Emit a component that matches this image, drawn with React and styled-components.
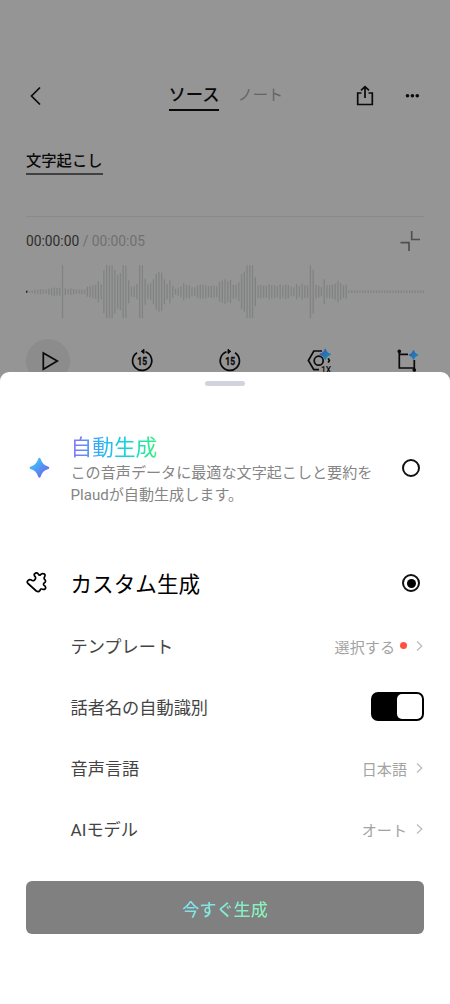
import React, { useState } from 'react'
import styled, { createGlobalStyle } from "styled-components";

const GlobalStyle = createGlobalStyle`
  * {
    box-sizing: border-box;
  }
  body {
    margin: 0;
    background: #959595;
    font-family: Roboto, "Noto Sans CJK JP", sans-serif;
  }
  button {
    border: 0;
    padding: 0;
    background: none;
    font: inherit;
    color: inherit;
  }
  svg {
    display: block;
    flex: none;
  }
`;

// bar heights, left to right
const wave = [
  2, 2, 2.5, 4.5, 4, 5, 4, 4, 6, 7, 8.5, 7.5, 8, 53, 7, 5.5, 6.5, 5.5, 4, 4, 5, 4,
  10, 11, 12.5, 14, 21, 15, 43, 53, 52, 53, 44, 34, 37, 53, 52, 23, 10, 11, 15,
  53, 53, 26, 15, 17, 25, 36, 40, 38, 25, 15, 23, 12, 6, 8, 11, 17, 13, 13, 9, 9,
  12, 14, 14, 13, 11, 12, 12, 11, 20, 22, 25, 21, 23, 14, 14, 19, 35, 40, 53, 53,
  53, 29, 13, 14, 12, 12, 15, 13, 13, 11, 15, 12, 14, 13, 9, 9, 15, 11, 16, 13,
  12, 53, 44, 14, 12, 9, 25, 13, 13, 14, 16, 22, 17, 13, 14,
  ...Array(28).fill(2.5),
];

const Screen = styled.main`
  position: relative;
  width: 450px;
  height: 1004px;
  overflow: hidden;
  background: #959595;
  color: #0a0a0a;
`;

const Player = styled.section`
  padding: 76px 26px 0;
`;

const TopBar = styled.header`
  height: 40px;
  display: grid;
  grid-template-columns: 142.5px auto 1fr;
  align-items: center;
`;

const Tabs = styled.div`
  display: flex;
  align-items: center;
  gap: 18px;
`;

const Tab = styled.button`
  height: 30px;
  font-size: ${(props) => (props.$active ? "17.3px" : "15.2px")};
  font-weight: ${(props) => (props.$active ? 500 : 400)};
  line-height: 28px;
  color: ${(props) => (props.$active ? "#0a0a0a" : "#656565")};
  border-bottom: 2px solid ${(props) => (props.$active ? "#0a0a0a" : "transparent")};
`;

const TopActions = styled.div`
  display: flex;
  align-items: center;
  justify-content: flex-end;
  gap: 30px;
  padding-right: 4px;
`;

const SubTab = styled.div`
  width: 77px;
  height: 28px;
  margin-top: 31px;
  line-height: 28px;
  font-size: 15.3px;
  font-weight: 500;
  white-space: nowrap;
  border-bottom: 2px solid #404040;
`;

const TimeRow = styled.div`
  display: flex;
  align-items: center;
  justify-content: space-between;
  height: 48px;
  margin-top: 41px;
  padding-right: 4px;
  border-top: 1px solid #8a8a8a;
  font-size: 13.8px;
  color: #707070;
`;

const Current = styled.span`
  color: #2d2d2d;
`;

const WaveBox = styled.div`
  height: 55px;
  padding-top: 1px;
`;

const Controls = styled.div`
  display: grid;
  grid-template-columns: 104px 88px 89px 90px auto;
  align-items: center;
  height: 44px;
  margin-top: 20px;
`;

const Play = styled.button`
  display: flex;
  align-items: center;
  justify-content: center;
  width: 44px;
  height: 44px;
  border-radius: 50%;
  background: #8c8c8c;
`;

const Sheet = styled.section`
  position: absolute;
  left: 0;
  right: 0;
  bottom: 0;
  height: 632px;
  padding: 9px 26px 0;
  border-radius: 9px 9px 0 0;
  background: #fff;
`;

const Handle = styled.div`
  width: 40px;
  height: 5px;
  margin: 0 auto;
  border-radius: 3px;
  background: #d1d4de;
`;

const Option = styled.div`
  display: grid;
  grid-template-columns: 44.5px 1fr 22px;
  align-items: center;
  height: ${(props) => props.$height};
  margin-top: ${(props) => props.$top};
`;

const OptionText = styled.div`
  padding-top: 4px;
`;

const AutoTitle = styled.h2`
  width: max-content;
  margin: 0;
  font-size: 21.7px;
  font-weight: 400;
  line-height: 28px;
  background: linear-gradient(90deg, #8a70f4 0%, #29b6f6 38%, #10d5dc 65%, #38ef7d 100%);
  background-clip: text;
  color: transparent;
`;

const CustomTitle = styled.h2`
  margin: 0;
  font-size: 21.6px;
  font-weight: 400;
  line-height: 30px;
  color: #000;
`;

const Description = styled.p`
  margin: 0;
  font-size: 15.1px;
  line-height: 22px;
  white-space: nowrap;
  color: #858585;
`;

const Radio = styled.button`
  display: flex;
  align-items: center;
  justify-content: center;
  width: 18px;
  height: 18px;
  border: 2px solid #111;
  border-radius: 50%;

  &::after {
    content: "";
    width: 9px;
    height: 9px;
    flex: none;
    border-radius: 50%;
    background: ${(props) => (props.$checked ? "#000" : "transparent")};
  }
`;

const Settings = styled.div`
  margin-top: 15px;
  padding-left: 44.5px;
`;

const Row = styled.div`
  display: flex;
  align-items: center;
  justify-content: space-between;
  height: 61px;
  font-size: 17.2px;
  color: #444;
`;

const Value = styled.div`
  display: flex;
  align-items: center;
  gap: 9px;
  font-size: 15.1px;
  color: #a3a3a3;
`;

const Dot = styled.i`
  width: 7px;
  height: 7px;
  margin-left: -4px;
  border-radius: 50%;
  background: #ff5340;
`;

const Switch = styled.button`
  display: flex;
  justify-content: ${(props) => (props.$on ? "flex-end" : "flex-start")};
  width: 53px;
  height: 29px;
  padding: 2px;
  border-radius: 7px;
  background: #000;

  &::after {
    content: "";
    width: 25px;
    height: 25px;
    border-radius: 5px;
    background: #fff;
  }
`;

const Generate = styled.button`
  display: flex;
  align-items: center;
  justify-content: center;
  width: 100%;
  height: 53px;
  margin-top: 22px;
  border-radius: 6px;
  background: #808080;
  font-size: 17.1px;
  font-weight: 500;
`;

const GenerateText = styled.span`
  padding-top: 1px;
  background: linear-gradient(90deg, #80e2f0, #88f2b6);
  background-clip: text;
  color: transparent;
`;

const BackIcon = () => (
  <svg width="20" height="20" viewBox="0 0 20 20" fill="none" stroke="#0a0a0a" strokeWidth="1.7">
    <path d="M14 1.500L5.500 10l8.500 8.500" />
  </svg>
);

const ShareIcon = () => (
  <svg width="18" height="22" viewBox="0 0 18 22" fill="none" stroke="#0a0a0a" strokeWidth="1.7">
    <path d="M5.500 8H1.700v11.500h14.600V8h-3.800M9 13V2M5 5.300L9 1.700l4 3.600" />
  </svg>
);

const MoreIcon = () => (
  <svg width="16" height="22" viewBox="0 0 16 22" fill="#0a0a0a">
    <circle cx="3.500" cy="10.700" r="1.800" />
    <circle cx="8.400" cy="10.700" r="1.800" />
    <circle cx="13.300" cy="10.700" r="1.800" />
  </svg>
);

const CollapseIcon = () => (
  <svg width="20" height="20" viewBox="0 0 20 20" fill="none" stroke="#505050" strokeWidth="1.7">
    <path d="M11.700 0v8.500h8.300M.5 11.700h8.500V20" />
  </svg>
);

const Waveform = () => (
  <svg width="398" height="54" viewBox="0 0 398 54">
    {wave.map((h, i) => (
      <rect
        key={i}
        x={i * 2.754 + 0.1}
        y={26.7 - h / 2}
        width="1.3"
        height={h}
        fill={i === 0 ? "#111" : "#818383"}
      />
    ))}
  </svg>
);

const PlayIcon = () => (
  <svg width="44" height="44" viewBox="0 0 44 44" fill="none" stroke="#0a0a0a" strokeWidth="1.7">
    <path d="M17.300 14v16.300L31.300 22z" />
  </svg>
);

const Skip15Icon = ({ forward }) => (
  <svg width="24" height="44" viewBox="0 0 24 44" fill="none" stroke="#0a0a0a" strokeWidth="1.7">
    <g transform={forward ? "translate(24 0) scale(-1 1)" : undefined}>
      <path d="M7 13.700a9.600 9.600 0 1 0 8.500-.9" />
      <path d="M14 10.300v4.200l-2.800-2.100z" fill="#0a0a0a" strokeWidth="1" />
    </g>
    <text x="12.200" y="25.800" textAnchor="middle" fill="#0a0a0a" stroke="#0a0a0a" strokeWidth=".3" fontSize="10.500" fontWeight="700" fontFamily="Roboto, sans-serif" textLength="9.800" lengthAdjust="spacingAndGlyphs">15</text>
  </svg>
);

const Sparkle = ({ id, x, y, size, from, to }) => (
  <g transform={`translate(${x} ${y}) scale(${size / 20})`}>
    <defs>
      <linearGradient id={id} x1="0" y1="0" x2="1" y2="1">
        <stop offset=".15" stopColor={from} />
        <stop offset=".8" stopColor={to} />
      </linearGradient>
    </defs>
    <path
      d="M8.900.8Q10 -.7 11.100.8Q12.700 7.300 19.200 8.900Q20.700 10 19.200 11.100Q12.700 12.700 11.100 19.200Q10 20.700 8.900 19.200Q7.300 12.700.8 11.100Q-.7 10 .8 8.900Q7.300 7.300 8.900.8Z"
      fill={`url(#${id})`}
      stroke="none"
    />
  </g>
);

const SpeedIcon = () => (
  <svg width="26" height="44" viewBox="0 0 26 44" fill="none" stroke="#0a0a0a" strokeWidth="1.700">
    <path d="M15 12H6.800L1.400 21.500L6.800 30.700H12" />
    <path d="M21.200 19.300l1.200 2.200-1.200 2.200" />
    <circle cx="11.700" cy="21.700" r="4.500" />
    <text x="14" y="33.500" fill="#0a0a0a" stroke="none" fontSize="8.500" fontWeight="500" fontFamily="Roboto, sans-serif">1X</text>
    <Sparkle id="speed-spark" x="12.500" y="9.500" size={11.500} from="#3b55b5" to="#168eb5" />
  </svg>
);

const CropIcon = () => (
  <svg width="26" height="44" viewBox="0 0 26 44" fill="none" stroke="#0a0a0a" strokeWidth="1.700">
    <path d="M2.300 12v17H18M2.300 15.300H11M17.300 21v11" />
    <circle cx="2.300" cy="12.300" r="1" fill="#0a0a0a" />
    <circle cx="17.300" cy="31" r="1" fill="#0a0a0a" />
    <Sparkle id="crop-spark" x="11.500" y="11" size={10} from="#3b55b5" to="#168eb5" />
  </svg>
);

const StarIcon = () => (
  <svg width="26" height="22" viewBox="0 0 26 22">
    <Sparkle id="auto-spark" x="3.400" y=".8" size={20} from="#3bc8f6" to="#686df2" />
  </svg>
);

const PuzzleIcon = () => (
  <svg width="22" height="24" viewBox="0 0 22 24" fill="none" stroke="#000" strokeWidth="1.700" strokeLinejoin="round">
    <path d="M2 9.500Q.5 11 2 12.500L10.300 20Q12.500 21.500 14 19.500Q14.500 17.300 16.500 18.300Q19.300 19 19.700 16.500Q19.500 15 18 14.300Q16.800 12.800 18.500 11.800Q20.300 10.500 19 8.800Q17.500 7.800 18.500 6Q20 3 17.200 2.600Q15.500 2.200 14.500 3.800Q13.300 4.800 12.300 3Q10.500 1 8.600 2.800Q7.600 4.500 9.300 5.800Q10.300 7.800 8.300 9.300Q6.800 10.300 5 8.800Q3.500 8 2 9.500Z" />
  </svg>
);

const ChevronIcon = () => (
  <svg width="8" height="12" viewBox="0 0 8 12" fill="none" stroke="#bcbcbc" strokeWidth="1.300">
    <path d="M1 1.500L5.800 6L1 10.500" />
  </svg>
);

const App = () => {
  const [mode, setMode] = useState("custom");
  const [speaker, setSpeaker] = useState(true);

  return (
    <Screen>
      <GlobalStyle />
      <Player>
        <TopBar>
          <BackIcon />
          <Tabs>
            <Tab $active>ソース</Tab>
            <Tab>ノート</Tab>
          </Tabs>
          <TopActions>
            <ShareIcon />
            <MoreIcon />
          </TopActions>
        </TopBar>
        <SubTab>文字起こし</SubTab>
        <TimeRow>
          <span><Current>00:00:00</Current> / 00:00:05</span>
          <CollapseIcon />
        </TimeRow>
        <WaveBox><Waveform /></WaveBox>
        <Controls>
          <Play><PlayIcon /></Play>
          <Skip15Icon />
          <Skip15Icon forward />
          <SpeedIcon />
          <CropIcon />
        </Controls>
      </Player>

      <Sheet>
        <Handle />
        <Option $height="76px" $top="44px">
          <StarIcon />
          <OptionText>
            <AutoTitle>自動生成</AutoTitle>
            <Description>この音声データに最適な文字起こしと要約を<br />Plaudが自動生成します。</Description>
          </OptionText>
          <Radio $checked={mode === "auto"} onClick={() => setMode("auto")} />
        </Option>
        <Option $height="34px" $top="60px">
          <PuzzleIcon />
          <OptionText>
            <CustomTitle>カスタム生成</CustomTitle>
          </OptionText>
          <Radio $checked={mode === "custom"} onClick={() => setMode("custom")} />
        </Option>
        <Settings>
          <Row>
            テンプレート
            <Value>選択する<Dot /><ChevronIcon /></Value>
          </Row>
          <Row>
            話者名の自動識別
            <Switch $on={speaker} onClick={() => setSpeaker(!speaker)} />
          </Row>
          <Row>
            音声言語
            <Value>日本語<ChevronIcon /></Value>
          </Row>
          <Row>
            AIモデル
            <Value>オート<ChevronIcon /></Value>
          </Row>
        </Settings>
        <Generate><GenerateText>今すぐ生成</GenerateText></Generate>
      </Sheet>
    </Screen>
  )
}

export default App;
